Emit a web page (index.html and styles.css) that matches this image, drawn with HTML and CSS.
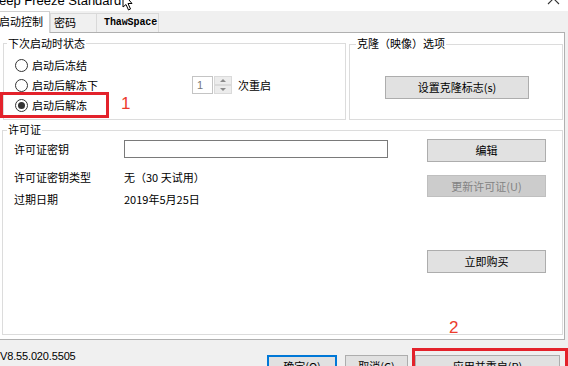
FILE: index.html
```html
<!DOCTYPE html>
<html lang="zh-CN">
<head>
<meta charset="utf-8">
<title>Deep Freeze Standard</title>
<link rel="stylesheet" href="styles.css">
</head>
<body>
<div class="win">
  <div class="titlebar">
    <span class="title">eep Freeze Standard</span>
    <svg class="cursor" width="12" height="11" viewBox="0 0 12 11"><path d="M1 -7 L1 7 L4 4.5 L6.5 10 L8.5 9 L6 3.5 L10 3.5 Z" fill="#fff" stroke="#000" stroke-width="1"/></svg>
    <svg class="close" width="14" height="11" viewBox="0 0 14 11"><path d="M1 -7 L12 4 M12 -7 L1 4" stroke="#333" stroke-width="1.1" fill="none"/></svg>
  </div>
  <div class="tabs">
    <div class="tab active">启动控制</div>
    <div class="tab pw">密码</div>
    <div class="tab mono">ThawSpace</div>
  </div>
  <div class="page">
    <div class="row-top">
      <div class="group g-boot">
        <span class="legend">下次启动时状态</span>
        <div class="radio-row">
          <span class="radio"><span class="circle"></span>启动后冻结</span>
        </div>
        <div class="radio-row">
          <span class="radio fixed"><span class="circle"></span>启动后解冻下</span>
          <span class="spin">
            <span class="spin-box">1</span>
            <span class="spin-btns">
              <span class="spin-btn"><span class="arr up"></span></span>
              <span class="spin-btn"><span class="arr down"></span></span>
            </span>
          </span>
          <span class="spin-label">次重启</span>
        </div>
        <div class="radio-row">
          <span class="radio"><span class="circle on"></span>启动后解冻</span>
        </div>
      </div>
      <div class="group g-clone">
        <span class="legend">克隆（映像）选项</span>
        <div class="btn clone-btn">设置克隆标志(s)</div>
      </div>
    </div>
    <div class="group g-license">
      <span class="legend">许可证</span>
      <div class="lic-left">
        <div class="lic-row r1"><span class="lic-label">许可证密钥</span><span class="lic-input"></span></div>
        <div class="lic-row r2"><span class="lic-label">许可证密钥类型</span><span class="lic-val">无（30 天试用）</span></div>
        <div class="lic-row r3"><span class="lic-label">过期日期</span><span class="lic-val">2019年5月25日</span></div>
      </div>
      <div class="lic-right">
        <div class="btn b-edit">编辑</div>
        <div class="btn b-update disabled">更新许可证(U)</div>
        <div class="btn b-buy">立即购买</div>
      </div>
    </div>
  </div>
  <div class="footer">
    <span class="version">V8.55.020.5505</span>
    <div class="actions">
      <div class="btn b-ok">确定(O)</div>
      <div class="btn b-cancel">取消(C)</div>
      <div class="btn b-apply">应用并重启(R)</div>
    </div>
  </div>
</div>
<div class="mark mark1"></div>
<span class="num num1">1</span>
<div class="mark mark2"></div>
<span class="num num2">2</span>
</body>
</html>
```
FILE: styles.css
```css
* { box-sizing: border-box; }
html, body { margin: 0; padding: 0; }
body {
  width: 568px;
  height: 366px;
  overflow: hidden;
  position: relative;
  background: #f0f0f0;
  font-family: "Noto Sans CJK SC", "Liberation Sans", sans-serif;
  font-size: 11px;
  color: #000;
}
.win { width: 568px; height: 366px; overflow: hidden; }

.titlebar {
  height: 11px;
  background: #fff;
  position: relative;
  overflow: hidden;
}
.title {
  display: block;
  font-family: "Liberation Sans", sans-serif;
  font-size: 13px;
  line-height: 15px;
  margin-top: -7px;
  margin-left: -1px;
  color: #000;
}
.cursor { position: absolute; left: 122px; top: 0; }
.close { position: absolute; left: 547px; top: 0; }

.tabs {
  height: 21px;
  display: flex;
  align-items: flex-end;
  background: #f0f0f0;
  position: relative;
  z-index: 2;
}
.tab {
  height: 19px;
  border: 1px solid #d9d9d9;
  border-bottom: none;
  background: #f0f0f0;
  line-height: 17px;
  white-space: nowrap;
}
.tab.active {
  height: 22px;
  margin-bottom: -1px;
  margin-left: -2px;
  width: 52px;
  background: #fff;
  padding-left: 0;
  line-height: 19px;
  border-color: #d0d0d0;
}
.tab.pw { width: 46px; padding-left: 3px; border-right: none; }
.tab.mono {
  width: 63px;
  padding-left: 7px;
  font-family: "Liberation Mono", monospace;
  font-size: 10px;
  font-weight: bold;
  letter-spacing: -0.1px;
}

.page {
  margin-left: -2px;
  width: 567px;
  height: 308px;
  border: 1px solid #b0b0b0;
  background: #fff;
  position: relative;
  z-index: 1;
}
.row-top { display: flex; align-items: flex-start; }

.group {
  border: 1px solid #dcdcdc;
  position: relative;
}
.legend {
  position: absolute;
  background: #fff;
  padding: 0 1px;
  line-height: 13px;
  white-space: nowrap;
}
.g-boot {
  margin-left: 4px;
  margin-top: 10px;
  width: 343px;
  height: 77px;
  padding: 11px 0 0 11px;
}
.g-boot .legend { left: 3px; top: -7px; }
.g-clone {
  margin-left: 3px;
  margin-top: 11px;
  width: 214px;
  height: 76px;
  padding: 31px 0 0 35px;
}
.g-clone .legend { left: 6px; top: -8px; }

.radio-row {
  height: 20px;
  display: flex;
  align-items: center;
}
.radio { display: flex; align-items: center; line-height: 13px; white-space: nowrap; }
.radio.fixed { width: 177px; }
.circle {
  width: 13px;
  height: 13px;
  border: 1px solid #333;
  border-radius: 50%;
  background: #fff;
  margin-right: 4px;
  display: flex;
  align-items: center;
  justify-content: center;
  flex: none;
}
.circle.on::after {
  content: "";
  width: 7px;
  height: 7px;
  border-radius: 50%;
  background: #333;
}
.spin { display: flex; height: 18px; }
.spin-box {
  width: 21px;
  height: 18px;
  border: 1px solid #c4c4c4;
  color: #777;
  font-family: "Liberation Sans", sans-serif;
  font-size: 11px;
  line-height: 16px;
  padding-left: 4px;
}
.spin-btns { display: flex; flex-direction: column; width: 18px; margin-left: 1px; }
.spin-btn {
  height: 9px;
  background: #ececec;
  border: 1px solid #dadada;
  display: flex;
  align-items: center;
  justify-content: center;
}
.arr { width: 0; height: 0; border-left: 3px solid transparent; border-right: 3px solid transparent; }
.arr.up { border-bottom: 3px solid #8a8a8a; }
.arr.down { border-top: 3px solid #8a8a8a; }
.spin-label { margin-left: 6px; line-height: 13px; }

.btn {
  background: #e1e1e1;
  border: 1px solid #adadad;
  text-align: center;
  white-space: nowrap;
  color: #000;
}
.clone-btn { width: 144px; height: 23px; line-height: 21px; }

.g-license {
  margin-left: 3px;
  margin-top: 10px;
  width: 561px;
  height: 205px;
  display: flex;
  align-items: flex-start;
}
.g-license .legend { left: 4px; top: -8px; }
.lic-left { padding: 9px 0 0 11px; width: 385px; }
.lic-row { display: flex; align-items: center; line-height: 14px; }
.lic-row.r1 { height: 18px; }
.lic-row.r2 { margin-top: 12px; height: 14px; }
.lic-row.r3 { margin-top: 8px; height: 14px; }
.lic-label { width: 110px; flex: none; }
.lic-input { width: 264px; height: 18px; border: 1px solid #7a7a7a; background: #fff; }
.lic-val { white-space: nowrap; }
.lic-right { margin-left: 39px; padding-top: 8px; width: 119px; }
.lic-right .btn { width: 119px; }
.b-edit { height: 23px; line-height: 21px; }
.b-update { margin-top: 13px; height: 22px; line-height: 20px; }
.btn.disabled { background: #cccccc; border-color: #bfbfbf; color: #838383; }
.b-buy { margin-top: 53px; height: 23px; line-height: 21px; }

.footer { display: flex; align-items: flex-start; height: 27px; }
.version {
  font-family: "Liberation Sans", sans-serif;
  font-size: 11px;
  line-height: 13px;
  margin-top: 10px;
  letter-spacing: -0.15px;
}
.actions { margin-left: auto; display: flex; padding-top: 15px; padding-right: 8px; }
.actions .btn { height: 23px; line-height: 21px; }
.b-ok { width: 70px; border: 2px solid #0078d7; line-height: 19px !important; }
.b-cancel { width: 63px; margin-left: 8px; }
.b-apply { width: 145px; margin-left: 7px; }

.mark { position: absolute; border: 3px solid #e3222b; z-index: 5; }
.mark1 { left: 0; top: 92px; width: 109px; height: 26px; }
.mark2 { left: 412px; top: 348px; width: 156px; height: 24px; }
.num {
  position: absolute;
  font-family: "Liberation Sans", sans-serif;
  font-size: 17px;
  line-height: 17px;
  color: #ec3b2c;
  z-index: 5;
}
.num1 { left: 121px; top: 95px; }
.num2 { left: 449px; top: 319px; }
```
